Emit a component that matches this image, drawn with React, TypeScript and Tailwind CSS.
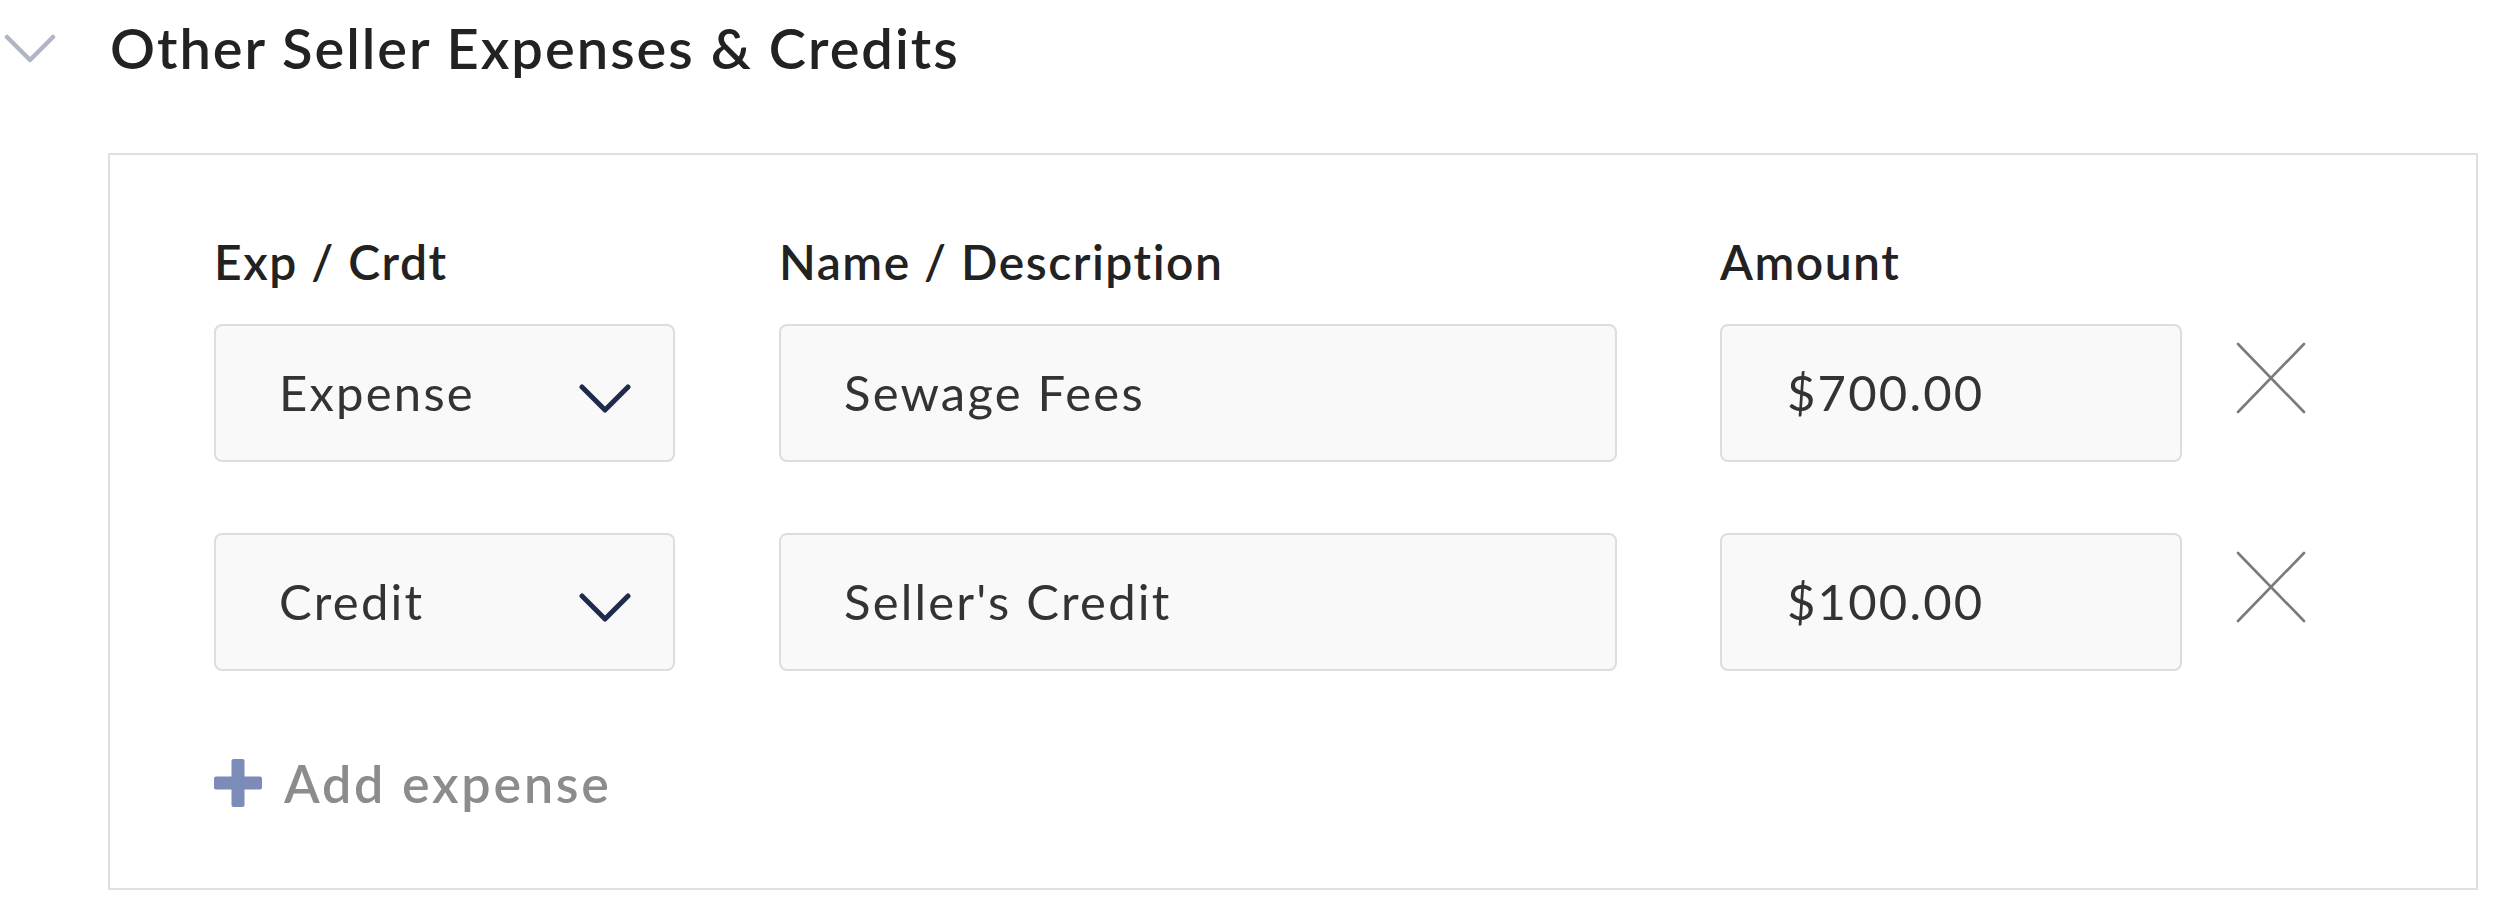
import React from 'react';

type Row = { kind: string; name: string; amount: string };

const rows: Row[] = [
  { kind: 'Expense', name: 'Sewage Fees', amount: '$700.00' },
  { kind: 'Credit', name: "Seller's Credit", amount: '$100.00' },
];

const font = { fontFamily: 'Lato, "Open Sans", sans-serif' };

const Chevron = ({ className, color, stroke }: { className: string; color: string; stroke: number }) => (
  <svg className={className} viewBox="0 0 52 30" fill="none">
    <polyline points="3,3 26,26 49,3" stroke={color} strokeWidth={stroke} strokeLinecap="round" strokeLinejoin="round" />
  </svg>
);

const field = 'flex h-[138px] items-center rounded-[8px] border-2 border-[#dddddd] bg-[#f9f9f9] text-[49px] tracking-[2.2px] text-[#333333]';

const ExpenseRow = ({ row }: { row: Row }) => (
  <div className="flex items-start">
    <div className={`${field} relative w-[461px] pl-[63px]`}>
      {row.kind}
      <Chevron className="absolute left-[363px] top-[58px] h-[30px] w-[52px]" color="#1f2b4d" stroke={5} />
    </div>
    <div className={`${field} ml-[104px] w-[838px] pl-[63px]`}>{row.name}</div>
    <div className={`${field} ml-[103px] w-[462px] pl-[65px]`}>{row.amount}</div>
    <button className="ml-[54px] mt-[18px] h-[72px] w-[70px]">
      <svg viewBox="0 0 70 72" className="h-[72px] w-[70px]" fill="none">
        <line x1="2" y1="2" x2="68" y2="70" stroke="#7a7a7a" strokeWidth="2.6" strokeLinecap="round" />
        <line x1="68" y1="2" x2="2" y2="70" stroke="#7a7a7a" strokeWidth="2.6" strokeLinecap="round" />
      </svg>
    </button>
  </div>
);

export default function App() {
  return (
    <div className="min-h-screen bg-white" style={font}>
      <div className="flex h-[96px] items-center">
        <Chevron className="ml-[4px] mt-[2px] h-[30px] w-[52px]" color="#b1b6c4" stroke={4.5} />
        <h2 className="ml-[54px] text-[56px] leading-[56px] font-semibold tracking-[2px] text-[#222222]">
          Other Seller Expenses &amp; Credits
        </h2>
      </div>

      <div className="ml-[108px] mt-[57px] w-[2370px] border-2 border-[#e0e0e0] pb-[81px] pl-[104px] pt-[83px]">
        <div className="flex text-[48px] leading-[48px] font-semibold tracking-[1.5px] text-[#222222]">
          <div className="w-[461px]">Exp / Crdt</div>
          <div className="ml-[104px] w-[838px]">Name / Description</div>
          <div className="ml-[103px] w-[462px]">Amount</div>
        </div>

        <div className="mt-[38px] flex flex-col gap-[71px]">
          {rows.map((r) => (
            <ExpenseRow key={r.kind} row={r} />
          ))}
        </div>

        <button className="mt-[88px] flex h-[48px] items-center">
          <svg viewBox="0 0 48 48" className="h-[48px] w-[48px]">
            <rect x="17.5" y="0" width="13" height="48" rx="2" fill="#7b8cb9" />
            <rect x="0" y="17.5" width="48" height="13" rx="2" fill="#7b8cb9" />
          </svg>
          <span className="ml-[22px] text-[52px] leading-[52px] font-semibold tracking-[2.8px] text-[#8c8c8c]">
            Add expense
          </span>
        </button>
      </div>
    </div>
  );
}
